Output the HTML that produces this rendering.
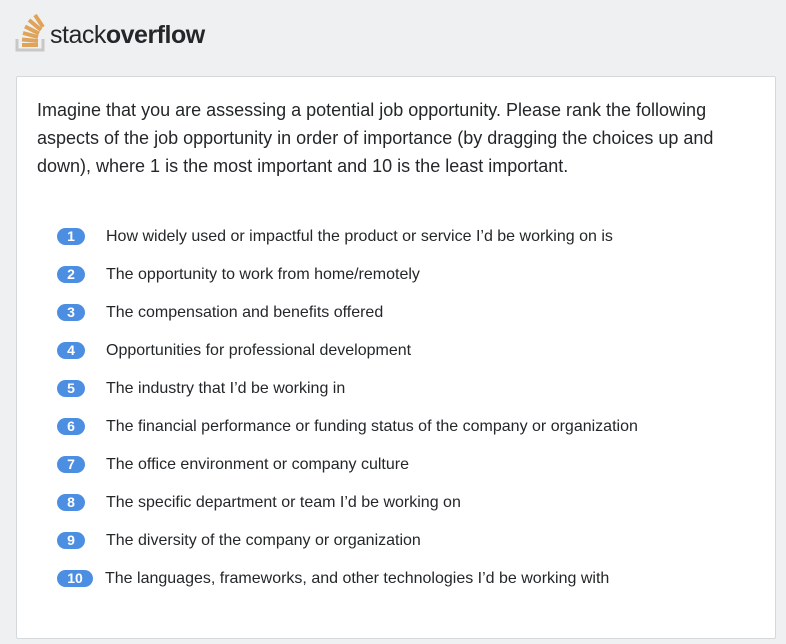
<!DOCTYPE html>
<html><head><style>
body{margin:0;width:786px;height:644px;background:#eff0f1;font-family:"Liberation Sans",Arial,sans-serif;position:relative;overflow:hidden}
.card{position:absolute;left:16px;top:76px;width:758px;height:561px;background:#fff;border:1px solid #d6d9dc;border-radius:2px}
.q{position:absolute;left:20px;top:19px;width:700px;font-size:18px;line-height:28px;color:#242729;letter-spacing:0}
.item{position:absolute;left:40px;height:20px;font-size:16px;color:#242729;line-height:20px}
.b{position:absolute;left:0;top:1px;width:28px;height:17px;border-radius:9px;background:#4c8fe2;color:#fff;font-weight:bold;font-size:14px;text-align:center;line-height:17px}
.t{position:absolute;left:49px;top:0;white-space:nowrap}
</style></head><body>
<svg style="position:absolute;left:14px;top:13px" width="34" height="40" viewBox="0 0 34 40">
<path d="M3 26v11h26V26" fill="none" stroke="#c8c8c8" stroke-width="3"/>
<g stroke="#e0a35a" stroke-width="4" fill="none">
<line x1="8" y1="32" x2="24" y2="32"/>
<line x1="8" y1="26.5" x2="24" y2="28"/>
<line x1="9" y1="20" x2="24" y2="24"/>
<line x1="11" y1="13.5" x2="25" y2="20.5"/>
<line x1="15" y1="7" x2="27" y2="17"/>
<line x1="21" y1="2" x2="29" y2="14"/>
</g></svg>
<div style="position:absolute;left:50px;top:20px;font-size:25px;color:#242729;letter-spacing:-0.5px;line-height:30px">stack<b>overflow</b></div>
<div class="card">
<div class="q">Imagine that you are assessing a potential job opportunity. Please rank the following aspects of the job opportunity in order of importance (by dragging the choices up and down), where 1 is the most important and 10 is the least important.</div>
<div class="item" style="top:150px"><span class="b">1</span><span class="t">How widely used or impactful the product or service I’d be working on is</span></div>
<div class="item" style="top:188px"><span class="b">2</span><span class="t">The opportunity to work from home/remotely</span></div>
<div class="item" style="top:226px"><span class="b">3</span><span class="t">The compensation and benefits offered</span></div>
<div class="item" style="top:264px"><span class="b">4</span><span class="t">Opportunities for professional development</span></div>
<div class="item" style="top:302px"><span class="b">5</span><span class="t">The industry that I’d be working in</span></div>
<div class="item" style="top:340px"><span class="b">6</span><span class="t">The financial performance or funding status of the company or organization</span></div>
<div class="item" style="top:378px"><span class="b">7</span><span class="t">The office environment or company culture</span></div>
<div class="item" style="top:416px"><span class="b">8</span><span class="t">The specific department or team I’d be working on</span></div>
<div class="item" style="top:454px"><span class="b">9</span><span class="t">The diversity of the company or organization</span></div>
<div class="item" style="top:492px"><span class="b" style="width:36px">10</span><span class="t" style="left:48px">The languages, frameworks, and other technologies I’d be working with</span></div>
</div>
</body></html>
